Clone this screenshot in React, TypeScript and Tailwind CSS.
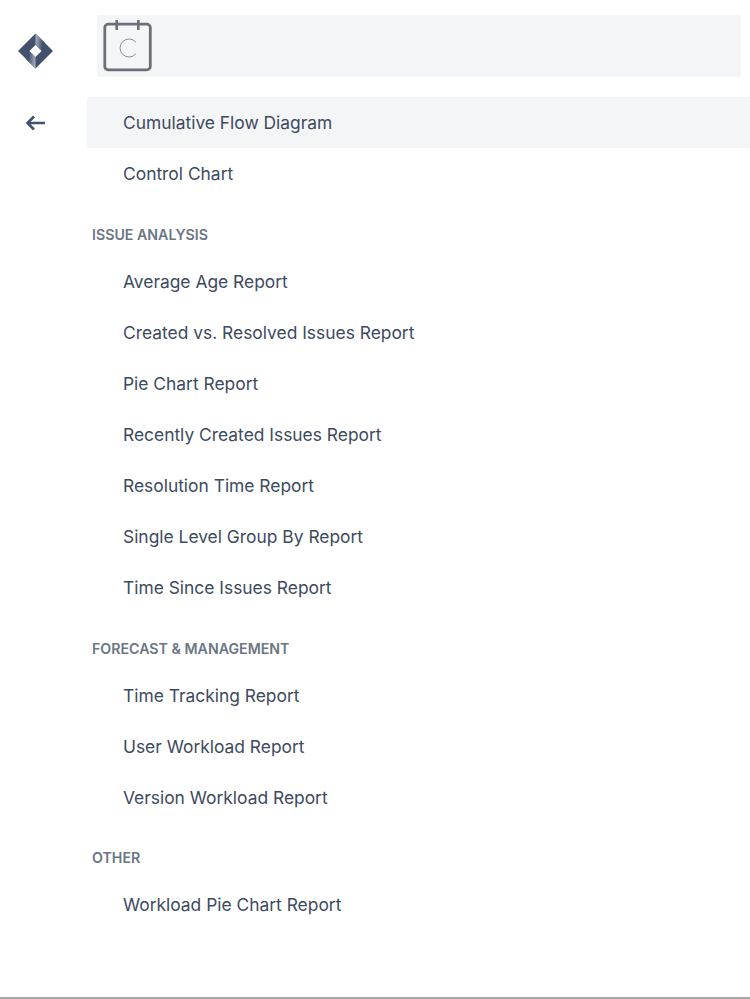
const groups = [
  { title: "", gap: "", items: ["Cumulative Flow Diagram", "Control Chart"] },
  {
    title: "ISSUE ANALYSIS",
    gap: "",
    items: [
      "Average Age Report",
      "Created vs. Resolved Issues Report",
      "Pie Chart Report",
      "Recently Created Issues Report",
      "Resolution Time Report",
      "Single Level Group By Report",
      "Time Since Issues Report",
    ],
  },
  { title: "FORECAST & MANAGEMENT", gap: "", items: ["Time Tracking Report", "User Workload Report", "Version Workload Report"] },
  { title: "OTHER", gap: "-mt-px", items: ["Workload Pie Chart Report"] },
];

function Logo() {
  return (
    <svg width="36" height="36" viewBox="0 0 36 36">
      <defs>
        <linearGradient id="foldTop" x1="0" y1="0.3" x2="1" y2="0.5">
          <stop offset="0" stopColor="#aab2c0" />
          <stop offset="0.75" stopColor="#42526e" />
        </linearGradient>
        <linearGradient id="foldBottom" x1="1" y1="0.7" x2="0" y2="0.5">
          <stop offset="0" stopColor="#aab2c0" />
          <stop offset="0.75" stopColor="#42526e" />
        </linearGradient>
      </defs>
      <path d="M17.500.5 35 18 17.500 35.500 0 18Z" fill="#42526e" />
      <path d="M17.500 .5 27 10 27 21 23.500 18 17.500 12Z" fill="url(#foldTop)" />
      <path d="M17.500 35.500 8 26 8 15 11.500 18 17.500 24Z" fill="url(#foldBottom)" />
      <path d="M17.500 12 23.500 18 17.500 24 11.500 18Z" fill="#fff" />
    </svg>
  );
}

function CalendarIcon() {
  return (
    <svg width="52" height="54" viewBox="0 0 52 54" fill="none">
      <rect x="1.800" y="5.100" width="45.500" height="45.800" rx="3.500" stroke="#6b6f76" strokeWidth="2.800" />
      <path d="M13.700 1v10M35.300 1v10" stroke="#6b6f76" strokeWidth="2.600" />
      <path d="M32.900 23.200a9 9 0 1 0 0 11.600" stroke="#8a8e94" strokeWidth="1" />
    </svg>
  );
}

export default function App() {
  return (
    <div className="flex h-[999px] w-[750px] overflow-hidden border-b-2 border-[#a9a9a9] bg-white font-['Inter',sans-serif]">
      <aside className="flex w-[87px] shrink-0 flex-col items-center pr-[15px] pt-[33px]">
        <Logo />
        <svg className="mt-[42px]" width="24" height="24" viewBox="0 0 24 24" fill="none" stroke="#42526e" strokeWidth="2.600">
          <path d="M21 12H4M10 5.500 3.500 12l6.500 6.500" />
        </svg>
      </aside>
      <main className="min-w-0 flex-1 pt-[15px]">
        <div className="ml-[10px] mr-[9px] flex h-[62px] items-center rounded-[3px] bg-[#f4f5f7] pl-[6px]">
          <CalendarIcon />
        </div>
        <div className="mt-[20px]">
          {groups.map((group) => (
            <section key={group.title} className={`mb-[24px] ${group.gap}`}>
              {group.title ? (
                <h2 className="mb-[9px] flex h-[24px] items-center pl-[5px] text-[14.200px] font-semibold text-[#6b7585]">
                  {group.title}
                </h2>
              ) : null}
              <ul>
                {group.items.map((item) => (
                  <li
                    key={item}
                    className={`flex h-[51px] items-center rounded-l-[3px] pl-[36px] pt-[2px] text-[17.400px] text-[#3e4a5e] ${
                      item === "Cumulative Flow Diagram" ? "bg-[#f4f5f7]" : ""
                    }`}
                  >
                    {item}
                  </li>
                ))}
              </ul>
            </section>
          ))}
        </div>
      </main>
    </div>
  );
}
